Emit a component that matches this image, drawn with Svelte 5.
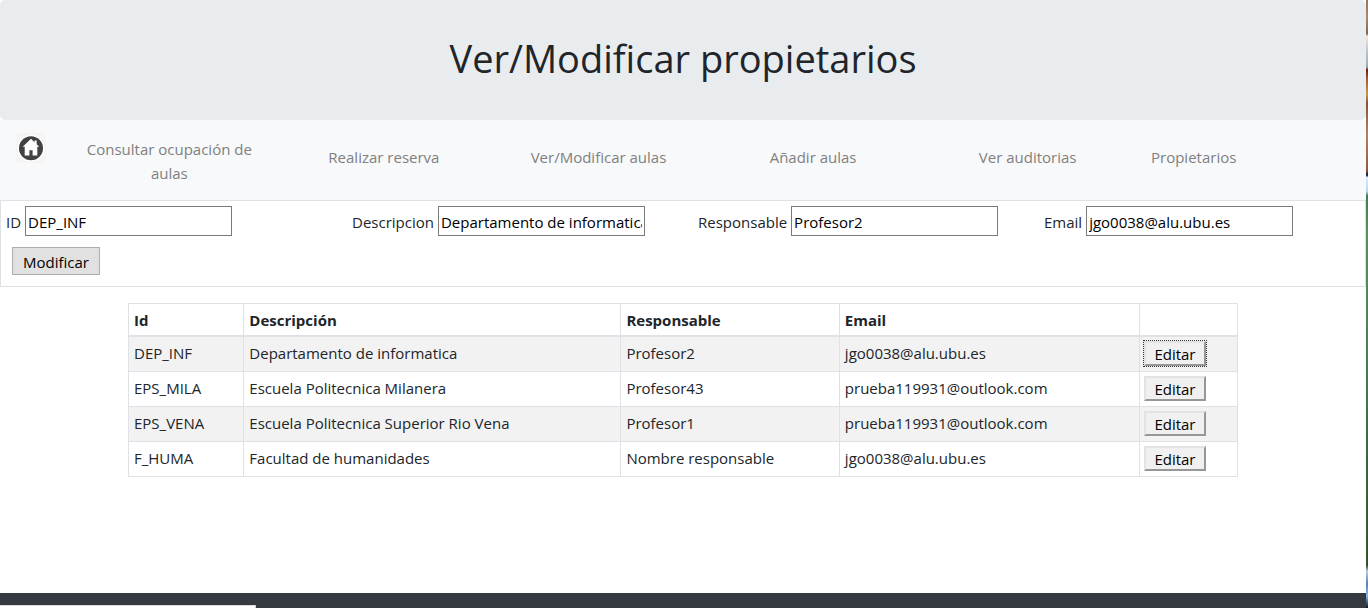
<script>
  const links = [
    'Consultar ocupación de aulas',
    'Realizar reserva',
    'Ver/Modificar aulas',
    'Añadir aulas',
    'Ver auditorias',
    'Propietarios'
  ];

  const owners = [
    { id: 'DEP_INF', description: 'Departamento de informatica', manager: 'Profesor2', email: 'jgo0038@alu.ubu.es' },
    { id: 'EPS_MILA', description: 'Escuela Politecnica Milanera', manager: 'Profesor43', email: 'prueba119931@outlook.com' },
    { id: 'EPS_VENA', description: 'Escuela Politecnica Superior Rio Vena', manager: 'Profesor1', email: 'prueba119931@outlook.com' },
    { id: 'F_HUMA', description: 'Facultad de humanidades', manager: 'Nombre responsable', email: 'jgo0038@alu.ubu.es' }
  ];

  let selected = $state(0);
  let form = $state({ ...owners[0] });

  function edit(index) {
    selected = index;
    form = { ...owners[index] };
  }
</script>

<div class="page">
  <div class="content">
    <header><h1>Ver/Modificar propietarios</h1></header>

    <nav>
      <a class="home" href="#inicio" aria-label="Inicio">
        <svg viewBox="0 0 30 30" width="30" height="30" aria-hidden="true">
          <rect width="30" height="30" fill="#f5f5f5" />
          <circle cx="15" cy="15.3" r="13.4" fill="#fff" />
          <circle cx="15" cy="15.3" r="12" fill="#424243" />
          <path d="M15 5.8 6.7 13.8h2v8.6h4.7v-5.2h3.2v5.2h4.7v-8.6h2l-2.6-2.5V7.6h-2.2v1.6z" fill="#fff" />
        </svg>
      </a>
      {#each links as link}
        <a href="#seccion">{link}</a>
      {/each}
    </nav>

    <form onsubmit={(event) => event.preventDefault()}>
      <div class="fields">
        <div class="field"><label for="owner-id">ID</label><input id="owner-id" type="text" bind:value={form.id} /></div>
        <div class="field"><label for="owner-description">Descripcion</label><input id="owner-description" type="text" bind:value={form.description} /></div>
        <div class="field"><label for="owner-manager">Responsable</label><input id="owner-manager" type="text" bind:value={form.manager} /></div>
        <div class="field"><label for="owner-email">Email</label><input id="owner-email" type="text" bind:value={form.email} /></div>
      </div>
      <button class="save" type="submit">Modificar</button>
    </form>

    <main>
      <table>
        <colgroup>
          <col class="c-id" /><col class="c-description" /><col class="c-manager" /><col class="c-email" /><col />
        </colgroup>
        <thead>
          <tr><th>Id</th><th>Descripción</th><th>Responsable</th><th>Email</th><th></th></tr>
        </thead>
        <tbody>
          {#each owners as owner, index}
            <tr>
              <td>{owner.id}</td>
              <td>{owner.description}</td>
              <td>{owner.manager}</td>
              <td>{owner.email}</td>
              <td class="action">
                <button class="edit" class:selected={selected === index} type="button" onclick={() => edit(index)}>Editar</button>
              </td>
            </tr>
          {/each}
        </tbody>
      </table>
    </main>

    <footer><div class="status"></div></footer>
  </div>
  <div class="edge"></div>
</div>

<style>
  :global(body) {
    margin: 0;
    background: #fff;
  }

  .page, .page * {
    box-sizing: border-box;
  }

  .page {
    display: flex;
    min-height: 100vh;
    font: 15px/24px "Open Sans", "Noto Sans", sans-serif;
    color: #212529;
  }

  .content {
    display: flex;
    flex: 1;
    flex-direction: column;
    min-width: 0;
  }

  header {
    padding: 34px 16px 38px;
    border-radius: 5px;
    background: #e9ecef;
    text-align: center;
  }

  h1 {
    margin: 0;
    font-size: 38px;
    font-weight: 400;
    line-height: 48px;
  }

  nav {
    display: grid;
    grid-template-columns: 62px repeat(5, 1fr) 231px;
    align-items: center;
    min-height: 80px;
    background: #f8f9fa;
  }

  nav a {
    padding: 2px 16px 0;
    color: #7f8080;
    text-align: center;
    text-decoration: none;
  }

  nav a:last-child {
    text-align: left;
  }

  nav a:nth-child(n + 3) {
    padding-bottom: 8px;
  }

  nav .home {
    display: flex;
    padding: 0 16px 24px;
  }

  .home svg {
    display: block;
    flex: none;
  }

  form {
    padding: 5px 5px 11px;
    border: 1px solid #dee2e6;
  }

  .fields {
    display: grid;
    grid-template-columns: 346fr 346fr 346fr 316fr;
  }

  .field {
    display: flex;
    align-items: center;
    gap: 4px;
  }

  label {
    padding-top: 2px;
  }

  input {
    width: 207px;
    min-width: 0;
    height: 30px;
    padding: 3px 2px 1px;
    border: 1px solid #7a7a7a;
    background: #fff;
    color: #000;
    font: inherit;
  }

  button {
    color: #000;
    font: inherit;
  }

  .save {
    display: block;
    margin: 11px 6px 0;
    padding: 2px 10px 0;
    border: 1px solid #adadad;
    background: #e1e1e1;
  }

  main {
    flex: 1;
    padding: 16px;
  }

  table {
    width: 100%;
    max-width: 1110px;
    margin: 0 auto;
    border-collapse: collapse;
    table-layout: fixed;
  }

  .c-id { width: 10.4%; }
  .c-description { width: 34%; }
  .c-manager { width: 19.7%; }
  .c-email { width: 27.1%; }

  th, td {
    border: 1px solid #dee2e6;
    text-align: left;
  }

  th {
    padding: 4px 5px 3px;
    border-bottom-width: 2px;
    font-weight: 700;
  }

  td {
    height: 35px;
    padding: 0 5px 2px;
  }

  tbody tr:nth-child(odd) {
    background: #f2f2f2;
  }

  .action {
    padding: 0 4px;
  }

  .edit {
    display: block;
    height: 25px;
    padding: 0 8px;
    border: 2px solid;
    border-color: #e3e3e3 #979797 #979797 #e3e3e3;
    background: #f0f0f0;
    line-height: 20px;
  }

  .selected {
    outline: 1px dotted #333;
  }

  footer {
    display: flex;
    align-items: flex-end;
    height: 15px;
    background: #343a40;
  }

  .status {
    width: 256px;
    height: 3px;
    border-top: 1px solid #ddd;
    border-right: 1px solid #ccc;
    background: #fff;
  }

  .edge {
    width: 2px;
    background: linear-gradient(
      #94765f 0%, #a58971 3%, #7c6652 5.5%, #f6e5da 6%, #c6c8cc 8%, #9caab4 11%,
      #6b1f10 11.5%, #a65b30 13%, #c99545 15.5%, #8c5037 17%, #b28068 22%, #925846 28%,
      #10152e 28.8%, #d9eaff 29.2%, #b9d5eb 31.5%, #427955 32.2%, #5c8f5c 38%,
      #4a7b56 60%, #3b6541 75%, #35562b 91%, #394d35 93%, #bccbe2 94%, #5c7eb8 96%,
      #8db8e8 98%, #101820 100%
    );
  }
</style>
